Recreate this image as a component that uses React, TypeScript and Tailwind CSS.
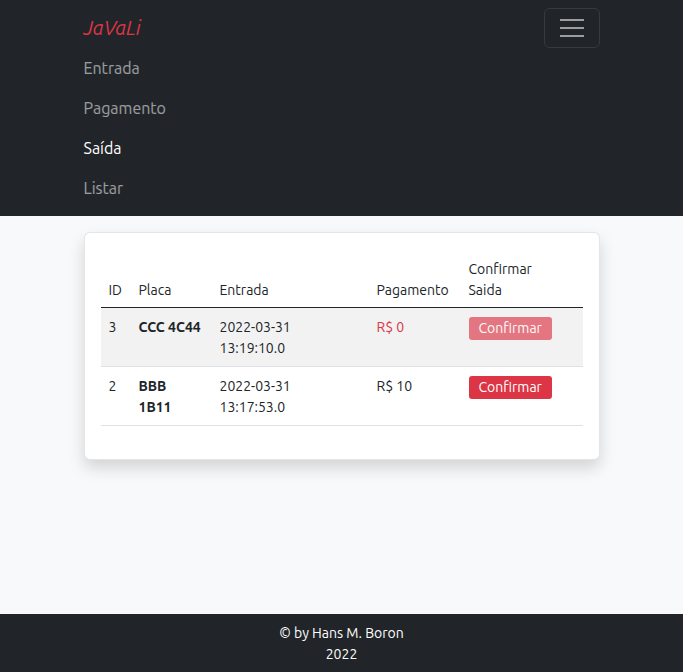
const links = [
  { label: "Entrada", active: false },
  { label: "Pagamento", active: false },
  { label: "Saída", active: true },
  { label: "Listar", active: false },
];

type Row = {
  id: number;
  placa: string[];
  data: string;
  hora: string;
  pagamento: string;
  pago: boolean;
};

const rows: Row[] = [
  { id: 3, placa: ["CCC 4C44"], data: "2022-03-31", hora: "13:19:10.0", pagamento: "R$ 0", pago: false },
  { id: 2, placa: ["BBB", "1B11"], data: "2022-03-31", hora: "13:17:53.0", pagamento: "R$ 10", pago: true },
];

const Navbar = () => {
  return (
    <nav className="bg-[#212529] py-2">
      <div className="mx-auto w-[540px] px-3">
        <div className="flex items-start justify-between">
          <a className="py-[5px] text-[20px] leading-[30px] italic text-[#dc3545]">JaVaLi</a>
          <button className="flex h-10 w-14 items-center justify-center rounded-md border border-white/10">
            <svg width="30" height="30" viewBox="0 0 30 30">
              <path
                d="M3 7h24M3 15h24M3 23h24"
                stroke="rgba(255,255,255,0.55)"
                strokeWidth="2"
                strokeLinecap="butt"
              />
            </svg>
          </button>
        </div>
        <ul className="flex flex-col">
          {links.map((l) => (
            <li key={l.label}>
              <a className={"block py-2 text-base leading-6 " + (l.active ? "text-white" : "text-white/55")}>
                {l.label}
              </a>
            </li>
          ))}
        </ul>
      </div>
    </nav>
  );
};

const SaidaTable = () => {
  return (
    <table className="w-full table-fixed border-collapse text-left text-[14px] leading-[21px] text-[#212529]">
      <colgroup>
        <col className="w-[30px]" />
        <col className="w-[81px]" />
        <col className="w-[157px]" />
        <col className="w-[92px]" />
        <col />
      </colgroup>
      <thead>
        <tr className="border-b border-[#212529] align-bottom">
          <th className="px-2 pt-[10px] pb-[6px] font-normal">ID</th>
          <th className="px-2 pt-[10px] pb-[6px] font-normal">Placa</th>
          <th className="px-2 pt-[10px] pb-[6px] font-normal">Entrada</th>
          <th className="px-2 pt-[10px] pb-[6px] font-normal">Pagamento</th>
          <th className="px-2 pt-[10px] pb-[6px] font-normal">
            Confirmar
            <br />
            Saida
          </th>
        </tr>
      </thead>
      <tbody>
        {rows.map((r, i) => (
          <tr key={r.id} className={"border-b border-[#dee2e6] align-top " + (i % 2 === 0 ? "bg-[#f2f2f2]" : "")}>
            <td className="px-2 pt-[9px] pb-[7px]">{r.id}</td>
            <td className="px-2 pt-[9px] pb-[7px] font-semibold">
              {r.placa.map((p) => (
                <div key={p}>{p}</div>
              ))}
            </td>
            <td className="px-2 pt-[9px] pb-[7px]">
              {r.data}
              <br />
              {r.hora}
            </td>
            <td className={"px-2 pt-[9px] pb-[7px] " + (r.pago ? "" : "text-[#dc3545]")}>{r.pagamento}</td>
            <td className="px-2 pt-[9px] pb-[7px]">
              <button
                disabled={!r.pago}
                className={
                  "rounded-[3px] bg-[#dc3545] px-[10px] py-px text-[14px] leading-[21px] text-white " +
                  (r.pago ? "" : "opacity-65")
                }
              >
                Confirmar
              </button>
            </td>
          </tr>
        ))}
      </tbody>
    </table>
  );
};

export default function App() {
  return (
    <div className="flex min-h-screen flex-col bg-[#f8f9fa] font-['Ubuntu','Open_Sans',sans-serif]">
      <Navbar />
      <main className="flex-1 pt-4">
        <div className="mx-auto w-[540px] px-3">
          <div className="rounded-md border border-black/10 bg-white px-4 pt-4 pb-[33px] shadow-[0_0.5rem_1rem_rgba(0,0,0,0.15)]">
            <SaidaTable />
          </div>
        </div>
      </main>
      <footer className="bg-[#212529] pt-[9px] pb-[7px] text-center text-[14px] leading-[21px] text-white">
        © by Hans M. Boron
        <br />
        2022
      </footer>
    </div>
  );
}
